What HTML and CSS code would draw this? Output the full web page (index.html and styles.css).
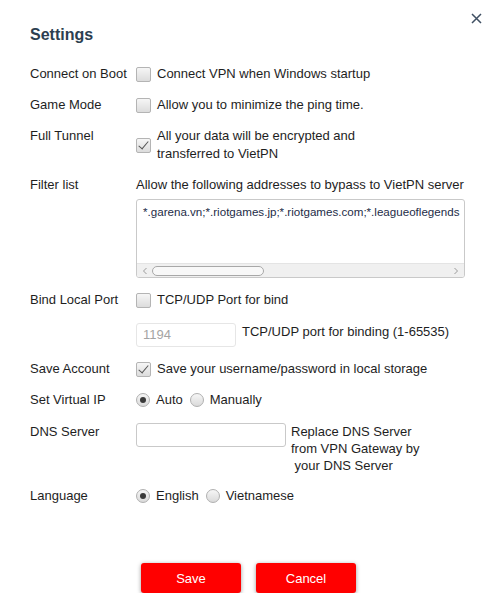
FILE: index.html
```html
<!DOCTYPE html>
<html lang="en">
<head>
    <meta charset="UTF-8">
    <title>Settings - VietPN</title>
    <link rel="stylesheet" href="styles.css">
</head>
<body>
    <div class="dialog">
        <button class="close" title="Close">
            <svg width="11" height="11" viewBox="0 0 11 11"><path d="M1 1 L10 10 M10 1 L1 10" stroke="#3f4f62" stroke-width="1.5" fill="none"/></svg>
        </button>
        <h1 class="title">Settings</h1>

        <div class="rows">
            <div class="row">
                <div class="label">Connect on Boot</div>
                <label class="check"><span class="box"></span>Connect VPN when Windows startup</label>
            </div>

            <div class="row">
                <div class="label">Game Mode</div>
                <label class="check"><span class="box"></span>Allow you to minimize the ping time.</label>
            </div>

            <div class="row">
                <div class="label">Full Tunnel</div>
                <label class="check"><span class="box checked"></span><span>All your data will be encrypted and<br>transferred to VietPN</span></label>
            </div>

            <div class="row">
                <div class="label">Filter list</div>
                <div class="field">
                    <div class="hint">Allow the following addresses to bypass to VietPN server</div>
                    <div class="textarea">
                        <div class="textarea-text">*.garena.vn;*.riotgames.jp;*.riotgames.com;*.leagueoflegends</div>
                        <div class="hscroll">
                            <svg width="6" height="8" viewBox="0 0 6 8"><path d="M4.5 1 L1.5 4 L4.5 7" stroke="#9a9a9a" fill="none"/></svg>
                            <span class="thumb"></span>
                            <span class="spacer"></span>
                            <svg width="6" height="8" viewBox="0 0 6 8"><path d="M1.5 1 L4.5 4 L1.5 7" stroke="#9a9a9a" fill="none"/></svg>
                        </div>
                    </div>
                </div>
            </div>

            <div class="row">
                <div class="label">Bind Local Port</div>
                <label class="check"><span class="box"></span>TCP/UDP Port for bind</label>
            </div>

            <div class="row row-shift">
                <div class="label"></div>
                <div class="inline">
                    <div class="input port">1194</div>
                    <span>TCP/UDP port for binding (1-65535)</span>
                </div>
            </div>

            <div class="row">
                <div class="label">Save Account</div>
                <label class="check"><span class="box checked"></span>Save your username/password in local storage</label>
            </div>

            <div class="row">
                <div class="label">Set Virtual IP</div>
                <div class="radios">
                    <label class="radio"><span class="dot on"></span>Auto</label>
                    <label class="radio"><span class="dot"></span>Manually</label>
                </div>
            </div>

            <div class="row row-shift">
                <div class="label">DNS Server</div>
                <div class="inline">
                    <div class="input dns"></div>
                    <span class="dns-note">Replace DNS Server<br>from VPN Gateway by<br>&nbsp;your DNS Server</span>
                </div>
            </div>

            <div class="row">
                <div class="label">Language</div>
                <div class="radios">
                    <label class="radio"><span class="dot on"></span>English</label>
                    <label class="radio"><span class="dot"></span>Vietnamese</label>
                </div>
            </div>
        </div>

        <div class="actions">
            <button class="btn">Save</button>
            <button class="btn">Cancel</button>
        </div>
    </div>
</body>
</html>
```

FILE: styles.css
```css
body {
    margin: 0;
    background: #fff;
    font-family: "Liberation Sans", Arial, sans-serif;
    font-size: 13px;
    color: #1e1e1e;
}
.dialog {
    position: relative;
    padding: 25px 30px 0;
}
.close {
    position: absolute;
    top: 11px;
    right: 14px;
    width: 13px;
    height: 13px;
    padding: 1px;
    border: none;
    background: none;
    cursor: pointer;
}
.title {
    margin: 0 0 20px;
    font-size: 16px;
    line-height: 20px;
    color: #2c3e50;
}
.rows {
    display: flex;
    flex-direction: column;
    gap: 13px;
}
.row {
    display: grid;
    grid-template-columns: 106px 1fr;
    line-height: 18px;
}
.row-shift {
    margin-top: 1px;
}
.check {
    display: flex;
    align-items: center;
    gap: 6px;
}
.box {
    position: relative;
    width: 13px;
    height: 13px;
    border: 1px solid #b4b4b4;
    border-radius: 2px;
    background: linear-gradient(#f6f6f6, #dcdcdc);
    flex-shrink: 0;
}
.box.checked::after {
    content: "";
    position: absolute;
    left: 4px;
    top: 0px;
    width: 4px;
    height: 9px;
    border: solid #555;
    border-width: 0 1.5px 1.5px 0;
    transform: rotate(40deg);
}
.hint {
    margin-bottom: 5px;
}
.textarea {
    width: 327px;
    height: 77px;
    border: 1px solid #c9c9c9;
    border-radius: 3px;
    display: flex;
    flex-direction: column;
    overflow: hidden;
}
.textarea-text {
    flex: 1;
    padding: 4px 6px;
    font-size: 11.6px;
    line-height: 15px;
    color: #1d2c48;
    white-space: nowrap;
}
.hscroll {
    height: 13px;
    background: #f0f0f0;
    border-top: 1px solid #e4e4e4;
    display: flex;
    align-items: center;
    padding: 0 5px;
    gap: 4px;
}
.thumb {
    width: 110px;
    height: 8px;
    border: 1px solid #a8a8a8;
    border-radius: 5px;
    background: #f8f8f8;
}
.spacer {
    flex: 1;
}
.inline {
    display: flex;
    align-items: flex-start;
    gap: 6px;
}
.input {
    box-sizing: border-box;
    height: 24px;
    border: 1px solid #c9c9c9;
    border-radius: 3px;
    background: #fff;
}
.port {
    width: 100px;
    border-color: #e6e6e6;
    padding: 3px 6px;
    color: #a4a4a4;
    line-height: 16px;
}
.dns {
    width: 150px;
    margin-right: -1px;
}
.dns-note {
    line-height: 17px;
}
.radios {
    display: flex;
    align-items: center;
    gap: 7px;
}
.radio {
    display: flex;
    align-items: center;
    gap: 6px;
}
.dot {
    position: relative;
    width: 12px;
    height: 12px;
    border: 1px solid #b0b0b0;
    border-radius: 50%;
    background: linear-gradient(#f6f6f6, #dadada);
}
.dot.on::after {
    content: "";
    position: absolute;
    left: 3px;
    top: 3px;
    width: 6px;
    height: 6px;
    border-radius: 50%;
    background: #3a3a3a;
}
.actions {
    display: flex;
    justify-content: center;
    gap: 15px;
    margin-top: 58px;
}
.btn {
    width: 100px;
    height: 30px;
    border: none;
    border-radius: 3px;
    background: #ff0000;
    color: #fff;
    font-family: "Liberation Sans", Arial, sans-serif;
    font-size: 13px;
    box-shadow: 0 1px 4px rgba(0, 0, 0, 0.4);
    cursor: pointer;
}
```
